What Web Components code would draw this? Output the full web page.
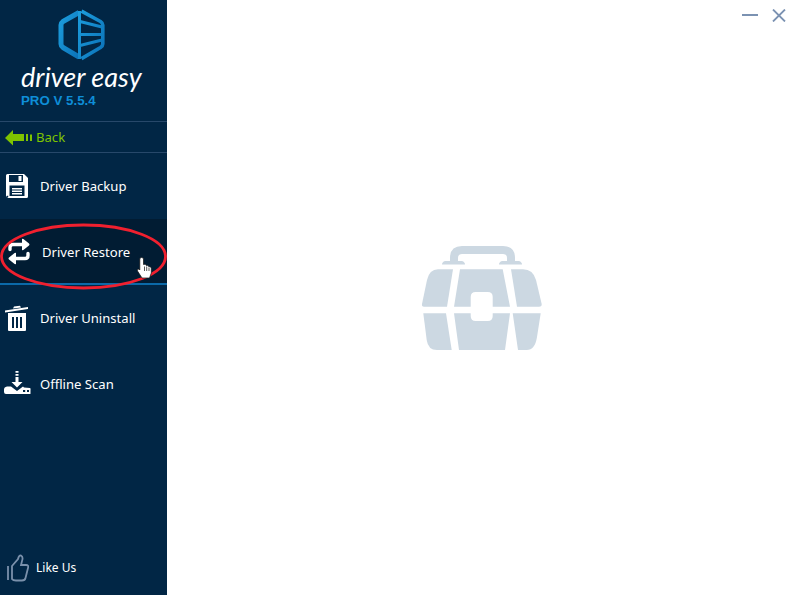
<!DOCTYPE html>
<html>
<head>
<meta charset="utf-8">
<style>
  html, body { margin: 0; height: 100%; background: #fff; }
  body { font-family: "Noto Sans", sans-serif; overflow: hidden; }
</style>
</head>
<body>
<app-window>
  <side-bar slot="side">
    <brand-logo slot="brand"></brand-logo>
    <back-link slot="back">Back</back-link>
    <nav-item icon="backup">Driver Backup</nav-item>
    <nav-item icon="restore" active>Driver Restore</nav-item>
    <nav-item icon="uninstall">Driver Uninstall</nav-item>
    <nav-item icon="scan">Offline Scan</nav-item>
    <like-us slot="foot">Like Us</like-us>
  </side-bar>
  <tool-box></tool-box>
</app-window>
<script>
(() => {
  // small helper, every element does the same thing in its constructor
  const shadow = (el, html) => {
    el.attachShadow({ mode: 'open' }).innerHTML = html
  }

  const ICONS = {
    backup: `<svg width="23" height="24" viewBox="0 0 23 24" style="margin:-1px 0 0 6px">
      <path fill="#fff" fill-rule="evenodd" d="M1.500 0H18L22 4V22.500Q22 24 20.500 24H2L0 22V1.500Q0 0 1.500 0ZM3 1V7.500Q3 8 3.500 8H16.500Q17 8 17 7.500V1ZM12.500 2H15.500V7H12.500ZM3.500 11.500V22H18.500V11.500ZM6 14H16V15.500H6ZM6 16.500H16V18H6ZM6 19H16V20.500H6ZM.8 21.800V23.200H2.200V21.800Z"/></svg>`,
    restore: `<svg width="22" height="27" viewBox="0 0 22 27" style="margin:-2px 0 0 8px" fill="none" stroke="#fff" stroke-width="3.400" stroke-linecap="round">
      <path d="M2 11.500V9.500Q2 6.500 5 6.500H15"/><path fill="#fff" stroke="none" d="M14 1Q15 .5 16 1.500L21 5.500Q22 6.500 21 7.500L16 11.500Q15 12.500 14 12Z"/>
      <path d="M20 15.500V17.500Q20 20.500 17 20.500H7"/><path fill="#fff" stroke="none" d="M8 15Q7 14.500 6 15.500L1 19.500Q0 20.500 1 21.500L6 25.500Q7 26.500 8 26Z"/></svg>`,
    uninstall: `<svg width="24" height="27" viewBox="0 0 24 27" style="margin:-1px 0 0 5px">
      <path fill="#fff" d="M0 6.500L23 3V5L0 8.500ZM8 4.500L9 2.500L15 1.800L16 3.500Z"/>
      <path fill="#fff" fill-rule="evenodd" d="M3 9H21V26Q21 27 20 27H4Q3 27 3 26ZM7 13V24H9V13ZM11 13V24H13V13ZM15 13V24H17V13Z"/></svg>`,
    scan: `<svg width="27" height="23" viewBox="0 0 27 23" style="margin:-3px 0 0 4px">
      <path fill="#fff" d="M11.500 0H14.500V1.800H11.500ZM11.500 3H14.500V4.800H11.500ZM11.500 6H14.500V11H18.500L13 16.500L7.500 11H11.500Z"/>
      <path fill="#fff" fill-rule="evenodd" d="M0 21V18.500Q0 16 3 15.500H7L13 20L19 15.500Q19.500 16 20 16.500L26 17Q27 17.500 26.500 19V22.500Q26.500 23 26 23H2Q0 23 0 21ZM19 19V21H21.200V19ZM23 19V21H25V19Z"/></svg>`
  }

  class AppWindow extends HTMLElement {
    constructor () {
      super()
      shadow(this, `
        <style>
          :host { display: flex; width: 796px; height: 595px; position: relative; }
          .main { flex: 1; display: flex; align-items: center; justify-content: center; position: relative; }
          .controls { position: absolute; top: 9px; right: 10px; display: flex; gap: 14px; }
        </style>
        <slot name="side"></slot>
        <div class="main">
          <slot></slot>
          <div class="controls">
            <svg width="16" height="12" viewBox="0 0 16 12"><path d="M0 6H16" stroke="#7b92b2" stroke-width="2"/></svg>
            <svg width="14" height="13" viewBox="0 0 14 13"><path d="M1 .5L13 12.500M13 .5L1 12.500" stroke="#7b92b2" stroke-width="1.800"/></svg>
          </div>
        </div>`)
    }
  }

  class SideBar extends HTMLElement {
    constructor () {
      super()
      shadow(this, `
        <style>
          :host { display: flex; flex-direction: column; width: 167px; height: 595px; background: #012645; position: relative; flex: none; }
          .foot { margin-top: auto; }
          svg.mark { position: absolute; left: 0; top: 222px; pointer-events: none; }
          svg.hand { position: absolute; left: 136px; top: 256px; }
        </style>
        <slot name="brand"></slot>
        <slot name="back"></slot>
        <slot></slot>
        <div class="foot"><slot name="foot"></slot></div>
        <svg class="mark" width="167" height="68" viewBox="0 0 167 68">
          <ellipse cx="83.500" cy="34.500" rx="82" ry="31.500" fill="none" stroke="#f0202f" stroke-width="2.800"/>
        </svg>
        <svg class="hand" width="17" height="23" viewBox="0 0 17 23">
          <path fill="#fff" stroke="#111" stroke-width=".7" d="M3.800 2.500Q5.500 .3 7.500 2.500V8.500Q9.500 7.500 10.300 9.500Q11.800 8.800 12.600 10.500Q14.500 10 15.300 12V17L13.500 22H6L1.500 15Q.5 13 3 13L3.800 14Z"/>
          <path stroke="#111" stroke-width=".7" d="M8.500 10.500V15M10.700 10.500V15M13 11.500V15"/>
        </svg>`)
    }
  }

  class BrandLogo extends HTMLElement {
    constructor () {
      super()
      shadow(this, `
        <style>
          :host { display: flex; flex-direction: column; height: 121px; box-sizing: border-box; padding: 9px 0 0 21px; }
          svg { margin-left: 37px; display: block; flex: none; }
          .name { font: italic 400 27px/26px Lato, sans-serif; color: #fff; margin-top: 3px; white-space: nowrap; }
          .ver { font: 700 13.300px/16px "Liberation Sans", sans-serif; color: #0e8ed8; margin-top: 3px; white-space: nowrap; }
        </style>
        <svg width="47" height="52" viewBox="0 0 47 52">
          <defs><linearGradient id="g" x1="0" y1="0" x2="1" y2="1"><stop offset="0" stop-color="#1c9ddd"/><stop offset="1" stop-color="#0b72b8"/></linearGradient></defs>
          <path fill="none" stroke="url(#g)" stroke-width="3.600" stroke-linejoin="round" d="M23.500 2.200L42.500 12.500Q44.800 14 44.800 16V35Q44.800 37 42.500 38.500L23.500 49.600"/>
          <path fill="none" stroke="url(#g)" stroke-width="5" stroke-linejoin="round" d="M21 3.500L5 12.500Q3 14 3 16V35Q3 37 5 38.500L21 48"/>
          <path fill="none" stroke="url(#g)" stroke-width="3" d="M21.500 2V50M22 12.500L44 18M22 25.500H44M22 36.500L44 31"/>
        </svg>
        <div class="name">driver easy</div>
        <div class="ver">PRO V 5.5.4</div>`)
    }
  }

  class BackLink extends HTMLElement {
    constructor () {
      super()
      shadow(this, `
        <style>
          :host { display: flex; align-items: center; height: 32px; box-sizing: border-box; border-top: 1px solid #27486a; border-bottom: 1px solid #27486a; padding-left: 5px; color: #7fc400; font-size: 13.100px; }
          svg { margin-right: 3px; margin-top: 1px; }
        </style>
        <svg width="28" height="16" viewBox="0 0 28 16">
          <path fill="#7fc400" d="M8 0V4H19V11H8V15.500L0 8ZM21 4H23V11H21ZM25 4.500H27V11H25Z"/>
        </svg><slot></slot>`)
    }
  }

  class NavItem extends HTMLElement {
    constructor () {
      super()
      const icon = ICONS[this.getAttribute('icon')] || ''
      shadow(this, `
        <style>
          :host { display: flex; height: 66px; box-sizing: border-box; color: #fff; font-size: 13.100px; }
          :host([active]) { background: #011c33; border-bottom: 2px solid #0b69a8; }
          .row { display: flex; align-items: center; height: 66px; }
          .ico { width: 40px; display: flex; flex: none; }
          :host([active]) .ico { width: 42px; }
          .txt { margin-top: -1px; white-space: nowrap; }
        </style>
        <div class="row"><span class="ico">${icon}</span><span class="txt"><slot></slot></span></div>`)
    }
  }

  class LikeUs extends HTMLElement {
    constructor () {
      super()
      shadow(this, `
        <style>
          :host { display: flex; align-items: center; height: 56px; color: #fff; font-size: 12px; padding-left: 7px; }
          svg { margin-right: 7px; margin-top: 1px; }
        </style>
        <svg width="22" height="28" viewBox="0 0 22 28" fill="none" stroke="#7a90ab" stroke-width="1.800">
          <path d="M1 12V26"/>
          <path d="M5 12L11 5Q12 1 14 1.500Q16.500 3 15 7L14 11H19Q22 11 21 14L18.500 24Q18 26.500 15 26.500H9Q6 26.500 5 25Z"/>
        </svg><slot></slot>`)
    }
  }

  class ToolBox extends HTMLElement {
    constructor () {
      super()
      shadow(this, `
        <style>
          :host { display: block; width: 121px; height: 106px; margin: 1px 0 0 0; }
          svg { display: block; }
        </style>
        <svg width="121" height="106" viewBox="0 0 121 106" fill="#ccd8e2">
          <path d="M29 16V13Q29 1 41 1H82Q94 1 94 13V16H98Q101 17 101 19.500H78Q78 17 81 16H86V13Q86 9 82 9H41Q37 9 37 13V16H41Q44 17 44 19.500H21Q21 17 24 16Z"/>
          <path d="M17 24.300H32L26 61.700H3Q.5 61.700 1 59L6 35Q8.500 24.300 17 24.300Z"/>
          <path fill-rule="evenodd" d="M39 24.300H81.700L89 61.700H71.700V52Q71.700 47 66.700 47H54.700Q49.700 47 49.700 52V61.700H33Z"/>
          <path d="M90 24.300H102Q112 24.300 115 35L120.700 59Q121 61.700 118 61.700H96Z"/>
          <path d="M2.300 68.300H25L30.700 105H16Q7 105 5.700 95Z"/>
          <path d="M33 68.300H49.700V71Q49.700 76 54.700 76H66.700Q71.700 76 71.700 71V68.300H89L84 105H38Z"/>
          <path d="M91.700 68.300H119.700L116 92Q114 105 105.700 105H97Z"/>
        </svg>`)
    }
  }

  window.customElements.define('app-window', AppWindow)
  window.customElements.define('side-bar', SideBar)
  window.customElements.define('brand-logo', BrandLogo)
  window.customElements.define('back-link', BackLink)
  window.customElements.define('nav-item', NavItem)
  window.customElements.define('like-us', LikeUs)
  window.customElements.define('tool-box', ToolBox)
})()
</script>
</body>
</html>
